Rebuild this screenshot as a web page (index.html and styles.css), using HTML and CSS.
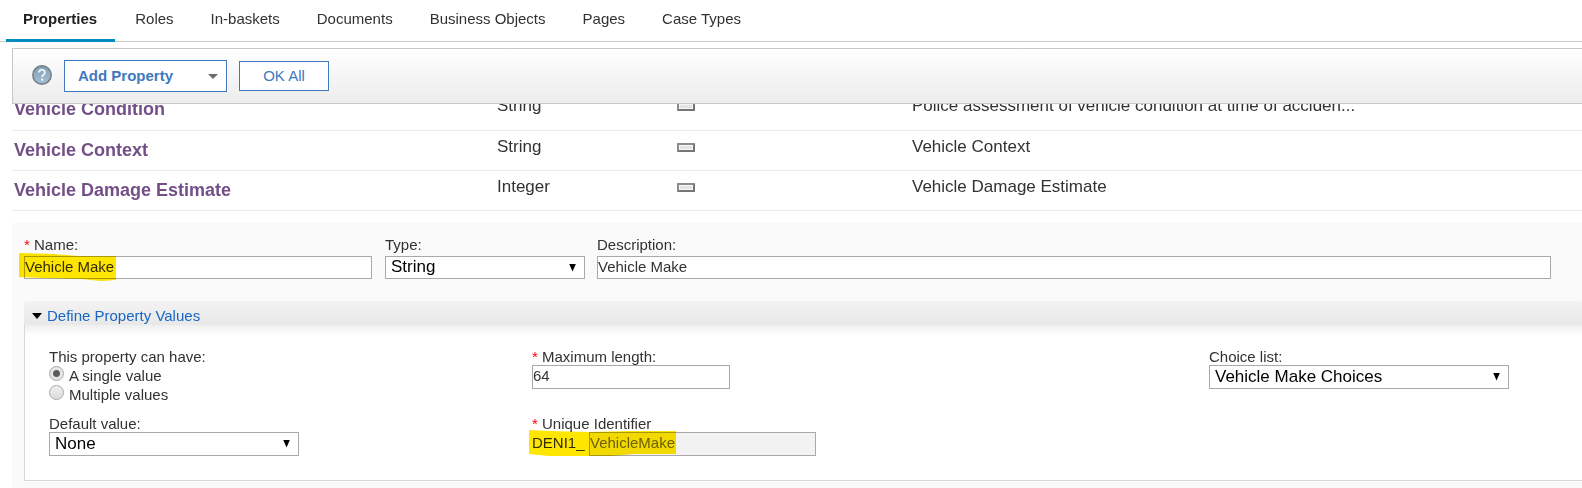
FILE: index.html
```html
<!DOCTYPE html>
<html lang="en">
<head>
<meta charset="utf-8">
<title>Properties</title>
<link rel="stylesheet" href="styles.css">
</head>
<body>
<nav class="tabs">
  <a class="tab tab-active" href="#properties" aria-current="page">Properties</a>
  <a class="tab" href="#roles">Roles</a>
  <a class="tab" href="#in-baskets">In-baskets</a>
  <a class="tab" href="#documents">Documents</a>
  <a class="tab" href="#business-objects">Business Objects</a>
  <a class="tab" href="#pages">Pages</a>
  <a class="tab" href="#case-types">Case Types</a>
</nav>
<main class="content">
  <div class="toolbar">
    <button class="help" type="button" aria-label="Help">
      <svg width="20" height="20" viewBox="0 0 20 20">
        <defs><linearGradient id="helpFill" x1="0" y1="0" x2="0" y2="1"><stop offset="0" stop-color="#7f9db2"/><stop offset="1" stop-color="#a3bfd2"/></linearGradient></defs>
        <circle cx="10" cy="10" r="9.2" fill="url(#helpFill)" stroke="#737d85" stroke-width="1.5"/>
        <path d="M7 7.6C7 3.9 13 4 13 7.3C13 9.5 10.2 9.4 10.2 12" fill="none" stroke="#e8f0f5" stroke-width="2"/>
        <rect x="9" y="13.4" width="2.3" height="2.3" fill="#e8f0f5"/>
      </svg>
    </button>
    <button class="btn btn-add" type="button">Add Property
      <svg width="10" height="5" viewBox="0 0 10 5"><path d="M0 0H10L5 5Z" fill="#6b6b6b"/></svg>
    </button>
    <button class="btn btn-ok" type="button">OK All</button>
  </div>
  <table class="props">
    <colgroup><col class="col-name"><col class="col-type"><col class="col-card"><col></colgroup>
    <tbody>
      <tr><td class="name"><a href="#condition">Vehicle Condition</a></td><td>String</td><td><span class="single"></span></td><td>Police assessment of vehicle condition at time of acciden...</td></tr>
      <tr><td class="name"><a href="#context">Vehicle Context</a></td><td>String</td><td><span class="single"></span></td><td>Vehicle Context</td></tr>
      <tr><td class="name"><a href="#damage">Vehicle Damage Estimate</a></td><td>Integer</td><td><span class="single"></span></td><td>Vehicle Damage Estimate</td></tr>
    </tbody>
  </table>
  <form class="editor">
    <div class="basics">
      <div class="field field-name">
        <label for="name"><span class="req">*</span> Name:</label>
        <input class="text" id="name" type="text" value="Vehicle Make">
        <svg class="marker marker-name" width="97" height="28" viewBox="0 0 97 28"><path d="M0 0L34 1L60 3H97V27L82 28L62 26L24 25L0 24Z" fill="#ffe600"/></svg>
      </div>
      <div class="field field-type">
        <label for="type">Type:</label>
        <span class="select"><select id="type"><option>String</option></select></span>
      </div>
      <div class="field field-desc">
        <label for="desc">Description:</label>
        <input class="text" id="desc" type="text" value="Vehicle Make">
      </div>
    </div>
    <section class="section">
      <h2 class="section-head"><button type="button" aria-expanded="true"><svg width="10" height="6" viewBox="0 0 10 6"><path d="M0 0H10L5 6Z" fill="#000"/></svg>Define Property Values</button></h2>
      <div class="section-body">
        <fieldset class="choices">
          <legend>This property can have:</legend>
          <label class="radio"><input type="radio" name="count" checked>A single value</label>
          <label class="radio"><input type="radio" name="count">Multiple values</label>
        </fieldset>
        <div class="field">
          <label for="max"><span class="req">*</span> Maximum length:</label>
          <input class="text width-max" id="max" type="text" value="64">
        </div>
        <div class="field">
          <label for="choice">Choice list:</label>
          <span class="select width-choice"><select id="choice"><option>Vehicle Make Choices</option></select></span>
        </div>
        <div class="field">
          <label for="default">Default value:</label>
          <span class="select width-default"><select id="default"><option>None</option></select></span>
        </div>
        <div class="field">
          <label for="uid"><span class="req">*</span> Unique Identifier</label>
          <div class="uid"><span class="prefix">DENI1_</span><input class="text readonly" id="uid" type="text" value="VehicleMake" readonly></div>
          <svg class="marker marker-uid" width="147" height="26" viewBox="0 0 147 26"><path d="M0 0L22 1L60 2L100 1H147V24L104 24L82 26H20L0 24Z" fill="#ffe600"/></svg>
        </div>
      </div>
    </section>
  </form>
</main>
</body>
</html>
```
FILE: styles.css
```css
* { box-sizing: border-box; }
body {
  margin: 0;
  background: #fff;
  color: #323232;
  font: 15px/18px "Liberation Sans", Arial, sans-serif;
  overflow-x: hidden;
}
button, input, select { font: inherit; color: inherit; }
button { cursor: pointer; }
svg { display: block; }

.tabs {
  display: flex;
  gap: 3px;
  height: 42px;
  padding-left: 6px;
  border-bottom: 1px solid #ccc;
}
.tab {
  height: 42px;
  padding: 10px 17px 0;
  color: #323232;
  text-decoration: none;
}
.tab-active {
  padding-right: 18px;
  border-bottom: 3px solid #008abf;
  color: #222;
  font-weight: bold;
}

.content { padding: 6px 0 0 12px; }
.toolbar {
  position: relative;
  z-index: 1;
  display: flex;
  align-items: center;
  height: 56px;
  padding-left: 19px;
  border: 1px solid #c8c8c8;
  border-right: 0;
  background: linear-gradient(#fff, #ececec);
}
.help { margin-right: 12px; padding: 0 0 2px; border: 0; background: none; }
.btn { border: 1px solid #4178be; background: #fff; color: #4178be; }
.btn-add {
  display: flex;
  align-items: center;
  justify-content: space-between;
  width: 163px;
  height: 32px;
  margin-right: 12px;
  padding: 0 8px 0 13px;
  font-weight: bold;
}
.btn-ok { width: 90px; height: 30px; padding: 0; }

.props {
  width: 100%;
  margin-top: -14px;
  border-collapse: collapse;
  table-layout: fixed;
  font-size: 17px;
  line-height: 20px;
}
.col-name { width: 483px; }
.col-type { width: 180px; }
.col-card { width: 235px; }
.props td {
  height: 40px;
  padding: 6px 2px 0;
  border-bottom: 1px solid #ebebeb;
  vertical-align: top;
}
.props .name { padding-top: 9px; font-size: 18px; font-weight: bold; }
.name a { color: #734f87; text-decoration: none; }
.single {
  display: block;
  width: 18px;
  height: 9px;
  margin-top: 6px;
  border: 2px solid #8c8c8c;
  border-right-color: #757575;
  border-bottom-color: #757575;
  border-radius: 1px;
  background: #e3e3e3;
  box-shadow: inset 0 0 0 1px #f6f6f6;
}

.editor { margin-top: 12px; padding: 13px 0 7px 12px; background: #fafafa; }
.basics { display: flex; gap: 12px; padding-right: 31px; }
.field { position: relative; }
.field > label { display: block; height: 17px; }
.basics .field > label { height: 20px; }
.field-name { width: 349px; padding-right: 1px; }
.field-type { width: 200px; }
.field-desc { flex: 1; }
.req { color: #f00; }
.text {
  display: block;
  width: 100%;
  height: 24px;
  padding: 0 0 2px;
  border: 1px solid #a9a9a9;
  border-radius: 0;
  background: #fff;
}
.select { position: relative; display: block; }
.select select {
  appearance: none;
  display: block;
  width: 100%;
  height: 24px;
  padding: 0 24px 0 5px;
  border: 1px solid #a9a9a9;
  border-radius: 0;
  background: #fff;
  color: #000;
  font-size: 17px;
}
.basics .text, .basics select { height: 23px; }
.select::after {
  content: "";
  position: absolute;
  top: 8px;
  right: 9px;
  width: 7px;
  height: 8px;
  background: #000;
  clip-path: polygon(0 0, 100% 0, 50% 100%);
  pointer-events: none;
}
.marker { position: absolute; mix-blend-mode: multiply; pointer-events: none; }
.marker-name { left: -5px; top: 17px; }
.marker-uid { left: -3px; top: 15px; }

.section { margin-top: 22px; }
.section-head {
  margin: 0;
  border-radius: 4px 0 0;
  background: linear-gradient(#f3f3f3, #e8e8e8);
  font: inherit;
}
.section-head button {
  display: flex;
  align-items: center;
  gap: 5px;
  height: 24px;
  padding: 6px 8px 0;
  border: 0;
  background: none;
  color: #1a66c2;
}
.section-body {
  display: grid;
  grid-template-columns: 483fr 677fr 373fr;
  row-gap: 11px;
  padding: 23px 0 24px 24px;
  border: solid #d8d8d8;
  border-width: 0 0 1px 1px;
  background: linear-gradient(#efefef, #fff 10px);
}
.choices { margin: 0; padding: 0; border: 0; }
.choices legend { padding: 0; }
.radio { display: flex; height: 19px; gap: 5px; padding-top: 1px; }
.radio input {
  appearance: none;
  width: 15px;
  height: 15px;
  margin: -1px 0 0;
  border: 1px solid #a8a8a8;
  border-radius: 50%;
  background: linear-gradient(#eee, #ddd);
}
.radio input:checked {
  background: radial-gradient(circle, #5c5c5c 3px, #e6e6e6 4px);
}
.width-max { width: 198px; }
.width-choice { width: 300px; }
.width-default { width: 250px; }
.uid { display: flex; }
.prefix { width: 57px; padding-top: 2px; }
.uid .text { width: 227px; }
.readonly { background: #f2f2f2; color: #6b6b6b; }
```
